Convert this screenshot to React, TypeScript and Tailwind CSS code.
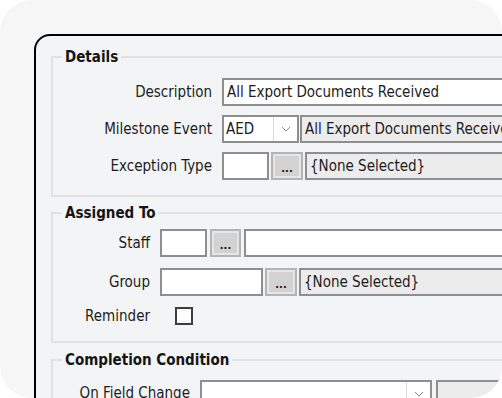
import React from 'react';

const font = { fontFamily: '"DejaVu Sans Condensed", "DejaVu Sans", "Liberation Sans", sans-serif' };

function Field({ className = '', children }: { className?: string; children?: React.ReactNode }) {
  return (
    <div
      className={`h-[28px] shrink-0 border-2 border-[#8e8e8e] flex items-center px-[3px] text-[15px] text-[#1c1c1c] whitespace-nowrap overflow-hidden ${className}`}
    >
      {children}
    </div>
  );
}

function DotsButton({ className = '' }: { className?: string }) {
  return (
    <div className={`h-[28px] shrink-0 border-2 border-[#b4b4b4] bg-[#e6e6e6] p-[2px] ${className}`}>
      <div className="h-full w-full bg-[#d2d2d2] flex items-end justify-center text-[11px] font-bold leading-[14px] text-[#111]">
        ...
      </div>
    </div>
  );
}

function Combo({ className = '', value }: { className?: string; value?: string }) {
  return (
    <div className={`h-[28px] shrink-0 border-2 border-[#8e8e8e] bg-white flex text-[15px] text-[#1c1c1c] ${className}`}>
      <div className="flex-1 flex items-center px-[2px] overflow-hidden whitespace-nowrap">{value}</div>
      <div className="w-[24px] border-l border-[#d8d8d8] flex items-center justify-center">
        <svg width="10" height="6" viewBox="0 0 10 6" fill="none" stroke="#8a8a8a" strokeWidth="1">
          <path d="M1 1l4 4 4-4" />
        </svg>
      </div>
    </div>
  );
}

function Row({ label, labelWidth, children }: { label: string; labelWidth: string; children: React.ReactNode }) {
  return (
    <div className="flex items-center gap-[10px]">
      <div className={`${labelWidth} shrink-0 text-right text-[15px] text-[#1c1c1c] whitespace-nowrap`}>{label}</div>
      {children}
    </div>
  );
}

function Group({ title, className = '', children }: { title: string; className?: string; children: React.ReactNode }) {
  return (
    <fieldset className={`border-2 border-[#e0e1e3] ${className}`}>
      <legend className="ml-[9px] px-[3px] text-[15px] font-bold leading-[18px] text-[#141414]">{title}</legend>
      {children}
    </fieldset>
  );
}

export default function App() {
  return (
    <div className="w-[502px] h-[398px] bg-white" style={font}>
      <div className="h-full rounded-[32px] bg-[#f6f6f7] overflow-hidden pl-[34px] pt-[34px]">
        <div className="w-[560px] h-[420px] border-2 border-black rounded-tl-[16px] bg-[#f3f4f6] pl-[15px] pt-[12px]">
          <Group title="Details" className="w-[520px]">
            <div className="flex flex-col gap-[9px] pt-[12px] pb-[15px]">
              <Row label="Description" labelWidth="w-[159px]">
                <Field className="w-[320px] bg-white">All Export Documents Received</Field>
              </Row>
              <Row label="Milestone Event" labelWidth="w-[159px]">
                <div className="flex gap-[1px]">
                  <Combo className="w-[77px]" value="AED" />
                  <Field className="w-[240px] bg-[#ececec]">All Export Documents Received</Field>
                </div>
              </Row>
              <Row label="Exception Type" labelWidth="w-[159px]">
                <div className="flex gap-[2px]">
                  <Field className="w-[47px] bg-white" />
                  <DotsButton className="w-[32px]" />
                  <Field className="w-[240px] bg-[#ececec]">{'{None Selected}'}</Field>
                </div>
              </Row>
            </div>
          </Group>

          <Group title="Assigned To" className="w-[520px] mt-[7px]">
            <div className="flex flex-col gap-[11px] pt-[7px] pb-[13px]">
              <Row label="Staff" labelWidth="w-[97px]">
                <div className="flex gap-[3px]">
                  <Field className="w-[47px] bg-white" />
                  <DotsButton className="w-[31px]" />
                  <Field className="w-[300px] bg-white" />
                </div>
              </Row>
              <Row label="Group" labelWidth="w-[97px]">
                <div className="flex gap-[2px]">
                  <Field className="w-[103px] bg-white" />
                  <DotsButton className="w-[32px]" />
                  <Field className="w-[240px] bg-[#ececec]">{'{None Selected}'}</Field>
                </div>
              </Row>
              <div className="flex items-center gap-[10px] -mt-[2px]">
                <div className="w-[97px] shrink-0 text-right text-[15px] text-[#1c1c1c]">Reminder</div>
                <div className="ml-[15px] w-[18px] h-[18px] border-2 border-[#3c3c3c] bg-white" />
              </div>
            </div>
          </Group>

          <Group title="Completion Condition" className="w-[520px] mt-[8px]">
            <div className="flex flex-col pt-[11px]">
              <Row label="On Field Change" labelWidth="w-[137px]">
                <div className="flex gap-[4px]">
                  <Combo className="w-[232px]" />
                  <Field className="w-[120px] bg-[#ececec]" />
                </div>
              </Row>
            </div>
          </Group>
        </div>
      </div>
    </div>
  );
}
